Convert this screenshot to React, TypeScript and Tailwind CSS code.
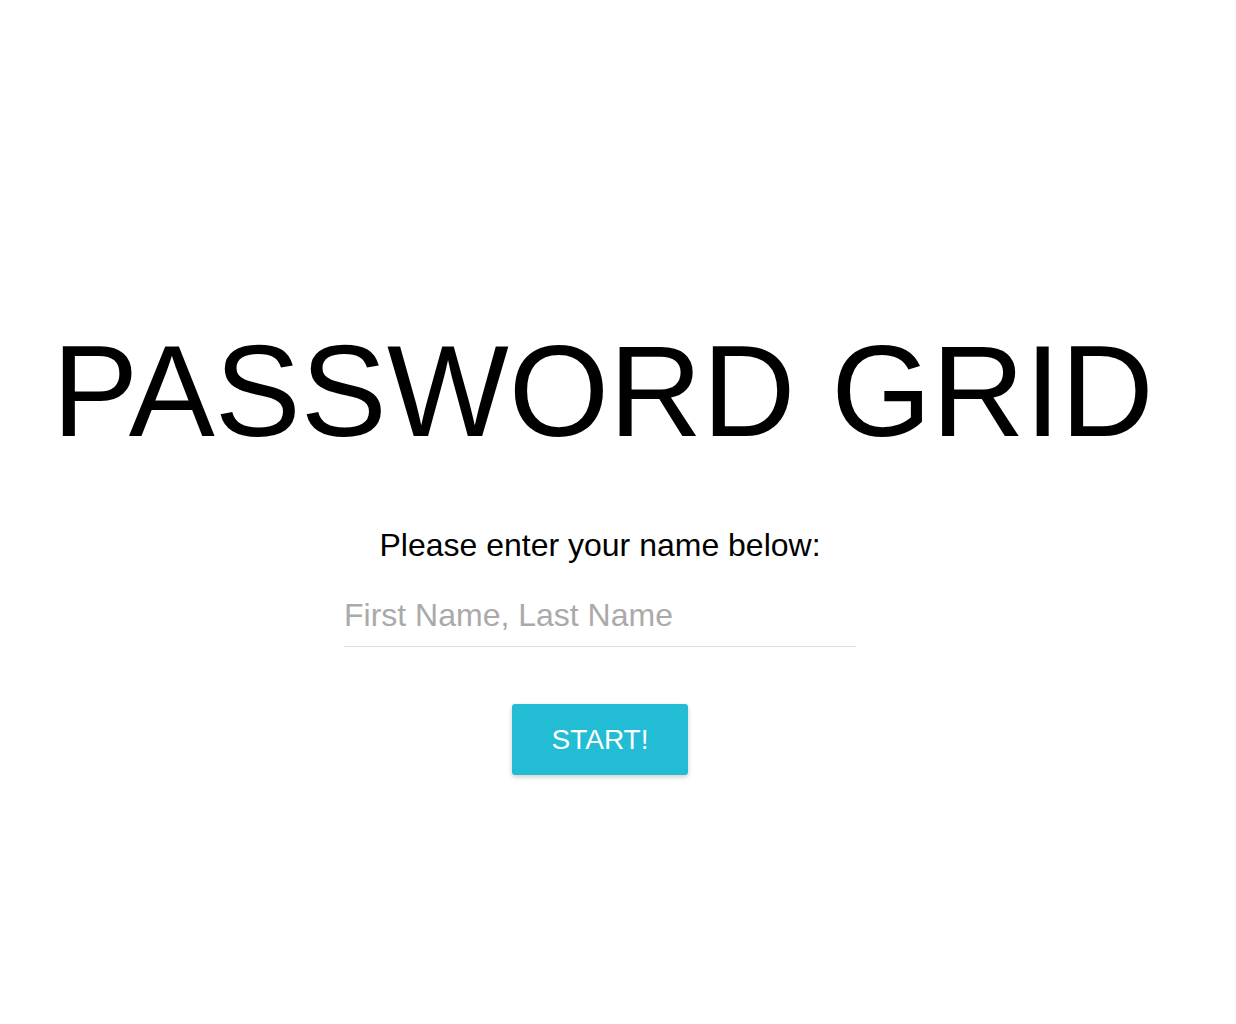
import { useState } from 'react'

export default function App() {
  const [name, setName] = useState('')

  return (
    <div
      className="min-h-screen w-[1200px] bg-white text-black"
      style={{ fontFamily: '"Liberation Sans", Arial, sans-serif' }}
    >
      <div className="flex flex-col items-center pt-[316px]">
        <h1 className="text-[129px] leading-[150px] font-normal whitespace-nowrap pl-[6px]">
          PASSWORD GRID
        </h1>
        <p className="mt-[59px] text-[32px] leading-[40px]">Please enter your name below:</p>
        <div className="mt-[26px] w-[512px] pb-[7px] border-b border-[#dddddd]">
          <input
            value={name}
            onChange={(e) => setName(e.target.value)}
            placeholder="First Name, Last Name"
            className="block w-full h-[48px] bg-transparent text-[32px] outline-none placeholder:text-[#aaaaaa]"
          />
        </div>
        <button className="mt-[57px] w-[176px] h-[71px] rounded-[3px] bg-[#22bcd4] text-white text-[28px] shadow-[0_2px_5px_rgba(0,0,0,0.2)]">
          START!
        </button>
      </div>
    </div>
  )
}
